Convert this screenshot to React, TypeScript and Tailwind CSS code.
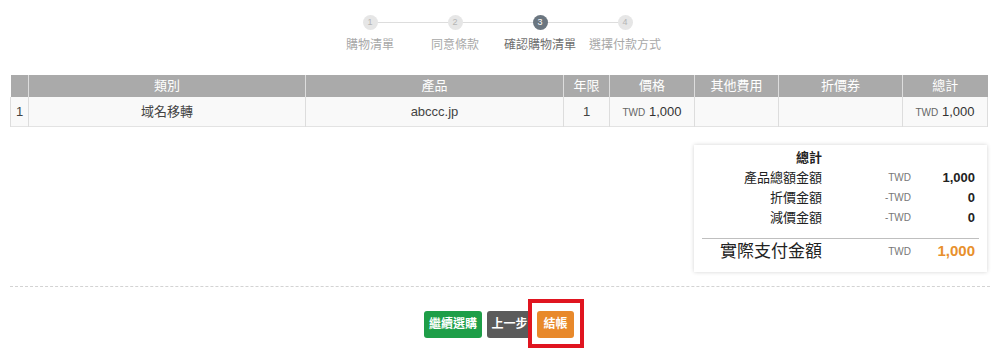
import React from 'react'

const font = { fontFamily: '"Liberation Sans", "Noto Sans CJK TC", sans-serif' }

const steps = ['購物清單', '同意條款', '確認購物清單', '選擇付款方式']

function Steps({ active }: { active: number }) {
    return (
        <div className="flex justify-center pt-[15px]">
            <div className="flex ml-[-5px]">
                {steps.map((label, i) => (
                    <div key={label} className="flex w-[85px] flex-col items-center">
                        <div className="flex w-full items-center">
                            <div className={`h-px flex-1 ${i === 0 ? '' : 'bg-[#dddddd]'}`} />
                            <div
                                className={`flex h-[15px] w-[15px] items-center justify-center rounded-full text-[9px] ${
                                    i === active ? 'bg-[#6b7680] text-white' : 'bg-[#e6e6e6] text-[#b5b5b5]'
                                }`}
                            >
                                {i + 1}
                            </div>
                            <div className={`h-px flex-1 ${i === steps.length - 1 ? '' : 'bg-[#dddddd]'}`} />
                        </div>
                        <div className={`mt-[8px] whitespace-nowrap text-[12px] leading-[14px] ${i === active ? 'text-[#6f6f6f]' : 'text-[#a8a8a8]'}`}>
                            {label}
                        </div>
                    </div>
                ))}
            </div>
        </div>
    )
}

function Money({ value }: { value: string }) {
    return (
        <span>
            <span className="text-[10px] text-[#666]">TWD</span> <span className="text-[13px] text-[#333]">{value}</span>
        </span>
    )
}

function CartTable() {
    const th = 'border-r border-[#dddddd] font-normal text-white text-[13px] h-[22px] p-0'
    const td = 'border-r border-[#dddddd] text-[13px] text-[#444] h-[29px] p-0 text-center'
    return (
        <table className="mx-[10px] mt-[23px] w-[977px] table-fixed border-collapse">
            <colgroup>
                <col className="w-[18px]" />
                <col className="w-[277px]" />
                <col className="w-[258px]" />
                <col className="w-[46px]" />
                <col className="w-[85px]" />
                <col className="w-[84px]" />
                <col className="w-[124px]" />
                <col className="w-[85px]" />
            </colgroup>
            <thead>
                <tr className="bg-[#aaaaaa]">
                    <th className={th}></th>
                    <th className={th}>類別</th>
                    <th className={th}>產品</th>
                    <th className={th}>年限</th>
                    <th className={th}>價格</th>
                    <th className={th}>其他費用</th>
                    <th className={th}>折價券</th>
                    <th className="p-0 text-[13px] font-normal text-white">總計</th>
                </tr>
            </thead>
            <tbody>
                <tr className="border-b border-[#e3e3e3] bg-[#f9f9f9]">
                    <td className={`${td} border-l`}>1</td>
                    <td className={td}>域名移轉</td>
                    <td className={td}>abccc.jp</td>
                    <td className={td}>1</td>
                    <td className={td}><Money value="1,000" /></td>
                    <td className={td}></td>
                    <td className={td}></td>
                    <td className={td}><Money value="1,000" /></td>
                </tr>
            </tbody>
        </table>
    )
}

function Summary() {
    const rows = [
        { label: '產品總額金額', cur: 'TWD', value: '1,000' },
        { label: '折價金額', cur: '-TWD', value: '0' },
        { label: '減價金額', cur: '-TWD', value: '0' },
    ]
    return (
        <div className="mr-[13px] mt-[18px] flex justify-end">
            <div className="w-[293px] bg-white px-[8px] pt-[2px] pb-[8px] shadow-[0_0_4px_rgba(0,0,0,0.18)]">
                <div className="grid grid-cols-[120px_89px_64px] items-center text-[#222]">
                    <div className="h-[21px] text-right text-[13px] font-bold leading-[21px]">總計</div>
                    <div />
                    <div />
                    {rows.map((r) => (
                        <React.Fragment key={r.label}>
                            <div className="h-[20px] text-right text-[13px] leading-[20px]">{r.label}</div>
                            <div className="text-right text-[10px] text-[#777]">{r.cur}</div>
                            <div className="text-right text-[13px] font-bold">{r.value}</div>
                        </React.Fragment>
                    ))}
                </div>
                <div className="mt-[10px] border-t border-[#bfbfbf]" />
                <div className="grid grid-cols-[120px_89px_64px] items-center pt-[1px]">
                    <div className="h-[24px] text-right text-[17px] leading-[24px] text-[#222]">實際支付金額</div>
                    <div className="text-right text-[10px] text-[#777]">TWD</div>
                    <div className="text-right text-[15px] font-bold text-[#e8902c]">1,000</div>
                </div>
            </div>
        </div>
    )
}

export default function App() {
    return (
        <div className="h-[356px] w-[1000px] overflow-hidden bg-white" style={font}>
            <Steps active={2} />
            <CartTable />
            <Summary />
            <div className="mx-[10px] mt-[14px] border-t border-dashed border-[#d3d3d3]" />
            <div className="mt-[24px] flex justify-center">
                <div className="ml-[-2px] flex gap-[5px]">
                    <button className="h-[27px] w-[58px] rounded-[3px] bg-[#1e9e48] text-[12px] font-bold text-white">繼續選購</button>
                    <button className="h-[27px] w-[45px] rounded-[3px] bg-[#5b5b5b] text-[12px] font-bold text-white">上一步</button>
                    <button className="relative h-[27px] w-[37px] rounded-[3px] bg-[#e8892b] text-[12px] font-bold text-white">
                        結帳
                        <span className="pointer-events-none absolute -left-[9px] -right-[10px] -top-[12px] -bottom-[10px] border-4 border-[#e01520]" />
                    </button>
                </div>
            </div>
        </div>
    )
}
